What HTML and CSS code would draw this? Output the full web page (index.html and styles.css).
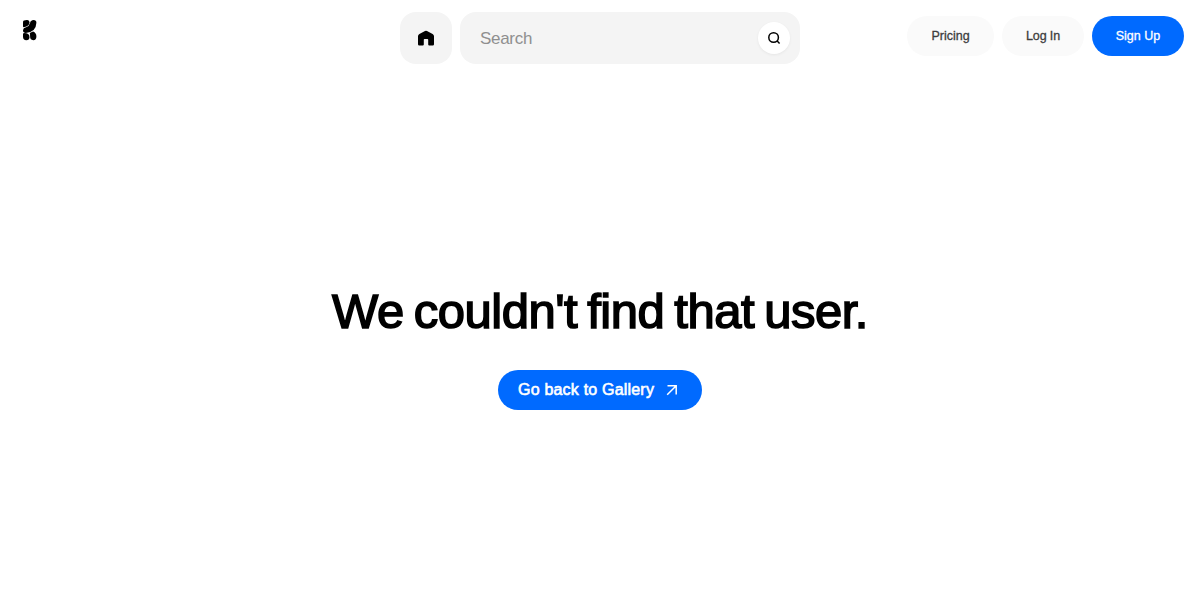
FILE: index.html
```html
<!DOCTYPE html>
<html lang="en">
<head>
    <meta charset="UTF-8">
    <meta name="viewport" content="width=device-width, initial-scale=1.0">
    <title>User not found</title>
    <link rel="stylesheet" href="styles.css">
</head>
<body>
    <header class="header">
        <a class="logo" href="#" aria-label="Home page">
            <svg width="14" height="22" viewBox="0 0 14 22">
                <path d="M1 1.6Q2.8.9 4.4 1.1Q6.6 1.5 6.5 3.4Q6.3 7 1 8.3Q0 8.4 0 7.2V3.2Q0 2 1 1.6Z"/>
                <path d="M9.3 1.2Q13.4.5 13.4 3.8Q13 13.4 2.8 14Q0 13.9 0 11.2Q.1 8.8 3 8.2Q6.1 7.6 6.8 4.5Q7.3 1.5 9.3 1.2Z"/>
                <path d="M1.2 14.1Q6.5 14.1 6.5 18.3Q6.4 21.2 3.4 21.2Q0 21.2 0 17.8V15.3Q0 14.1 1.2 14.1Z"/>
                <path d="M6.8 14.1Q8.2 13.1 10.1 12.4Q13.4 13.6 13.4 17.5Q13.4 21.2 10.3 21.2Q7 21.1 7.1 17.6Q7.1 15.7 6.8 14.1Z"/>
            </svg>
        </a>
        <div class="search-bar">
            <a class="home-button" href="#" aria-label="Home">
                <svg width="16" height="16" viewBox="0 0 16 16">
                    <path d="M7 .9Q8 .4 9 .9L14.6 4Q16 4.9 16 6.3V14.2Q16 15.5 14.7 15.5H11.3Q10.2 15.5 10.2 14.5V9.8Q10.2 9 9.4 9H6.6Q5.8 9 5.8 9.8V14.5Q5.8 15.5 4.7 15.5H1.3Q0 15.5 0 14.2V6.3Q0 4.9 1.4 4Z"/>
                </svg>
            </a>
            <form class="search-form">
                <input class="search-input" type="text" placeholder="Search">
                <button class="search-button" type="button" aria-label="Search">
                    <svg width="14" height="14" viewBox="0 0 14 14">
                        <circle cx="6.6" cy="6.5" r="4.8"/>
                        <path d="M9.9 9.8L12.6 12.5"/>
                    </svg>
                </button>
            </form>
        </div>
        <nav class="nav">
            <a class="nav-button pricing" href="#">Pricing</a>
            <a class="nav-button login" href="#">Log In</a>
            <a class="nav-button signup" href="#">Sign Up</a>
        </nav>
    </header>
    <main class="content">
        <h1>We couldn't find that user.</h1>
        <a class="back-button" href="#">
            <span>Go back to Gallery</span>
            <svg width="12" height="12" viewBox="0 0 12 12">
                <path d="M1.5 1.8H10.2V10.5M10.2 1.8L1.2 10.8"/>
            </svg>
        </a>
    </main>
</body>
</html>
```
FILE: styles.css
```css
body {
    margin: 0;
    height: 100vh;
    overflow: hidden;
    display: flex;
    flex-direction: column;
    background-color: #fff;
    color: #000;
    font-family: "Liberation Sans", Arial, sans-serif;
}
a {
    color: inherit;
    text-decoration: none;
}
.header {
    display: grid;
    grid-template-columns: 1fr 400px 1fr;
    align-items: start;
    height: 76px;
    padding: 12px 16px 0;
    box-sizing: border-box;
}
.logo {
    display: flex;
    padding: 7px 0 0 7px;
}
.search-bar {
    display: flex;
    gap: 8px;
}
.home-button {
    display: flex;
    align-items: center;
    justify-content: center;
    width: 52px;
    height: 52px;
    border-radius: 16px;
    background-color: #f4f4f4;
}
.search-form {
    flex: 1;
    display: flex;
    align-items: center;
    min-width: 0;
    height: 52px;
    padding: 0 10px 0 20px;
    box-sizing: border-box;
    border-radius: 16px;
    background-color: #f4f4f4;
}
.search-input {
    flex: 1;
    min-width: 0;
    padding: 2px 0 0;
    border: none;
    outline: none;
    background: transparent;
    font-family: inherit;
    font-size: 17px;
    letter-spacing: -0.3px;
}
.search-input::placeholder {
    color: #8f8f8f;
}
.search-button {
    display: flex;
    align-items: center;
    justify-content: center;
    width: 32px;
    height: 32px;
    padding: 0;
    border: none;
    border-radius: 50%;
    background-color: #fff;
    box-shadow: 0 1px 3px rgba(0, 0, 0, 0.06);
}
.search-button svg {
    fill: none;
    stroke: #000;
    stroke-width: 1.5;
}
.nav {
    display: flex;
    justify-content: flex-end;
    gap: 8px;
    padding-top: 4px;
}
.nav-button {
    display: flex;
    align-items: center;
    justify-content: center;
    height: 40px;
    padding-bottom: 1px;
    box-sizing: border-box;
    border-radius: 20px;
    background-color: #fafafa;
    color: #3d3d3d;
    font-size: 12.5px;
    -webkit-text-stroke: 0.3px currentColor;
    white-space: nowrap;
}
.pricing {
    width: 87px;
}
.login {
    width: 82px;
    letter-spacing: -0.1px;
}
.signup {
    width: 92px;
    background-color: #006aff;
    color: #fff;
}
.content {
    display: flex;
    flex-direction: column;
    align-items: center;
    padding-top: 206px;
}
.content h1 {
    margin: 0 0 30px;
    font-size: 49px;
    font-weight: 400;
    line-height: 58px;
    letter-spacing: -0.5px;
    word-spacing: -3px;
    -webkit-text-stroke: 1.6px currentColor;
    white-space: nowrap;
}
.back-button {
    display: flex;
    align-items: center;
    justify-content: space-between;
    width: 204px;
    height: 40px;
    padding: 0 24px 1px 20px;
    box-sizing: border-box;
    border-radius: 20px;
    background-color: #006aff;
    color: #fff;
    font-size: 16px;
    letter-spacing: 0.2px;
    -webkit-text-stroke: 0.6px currentColor;
    white-space: nowrap;
}
.back-button svg {
    fill: none;
    stroke: #fff;
    stroke-width: 1.5;
}
```
